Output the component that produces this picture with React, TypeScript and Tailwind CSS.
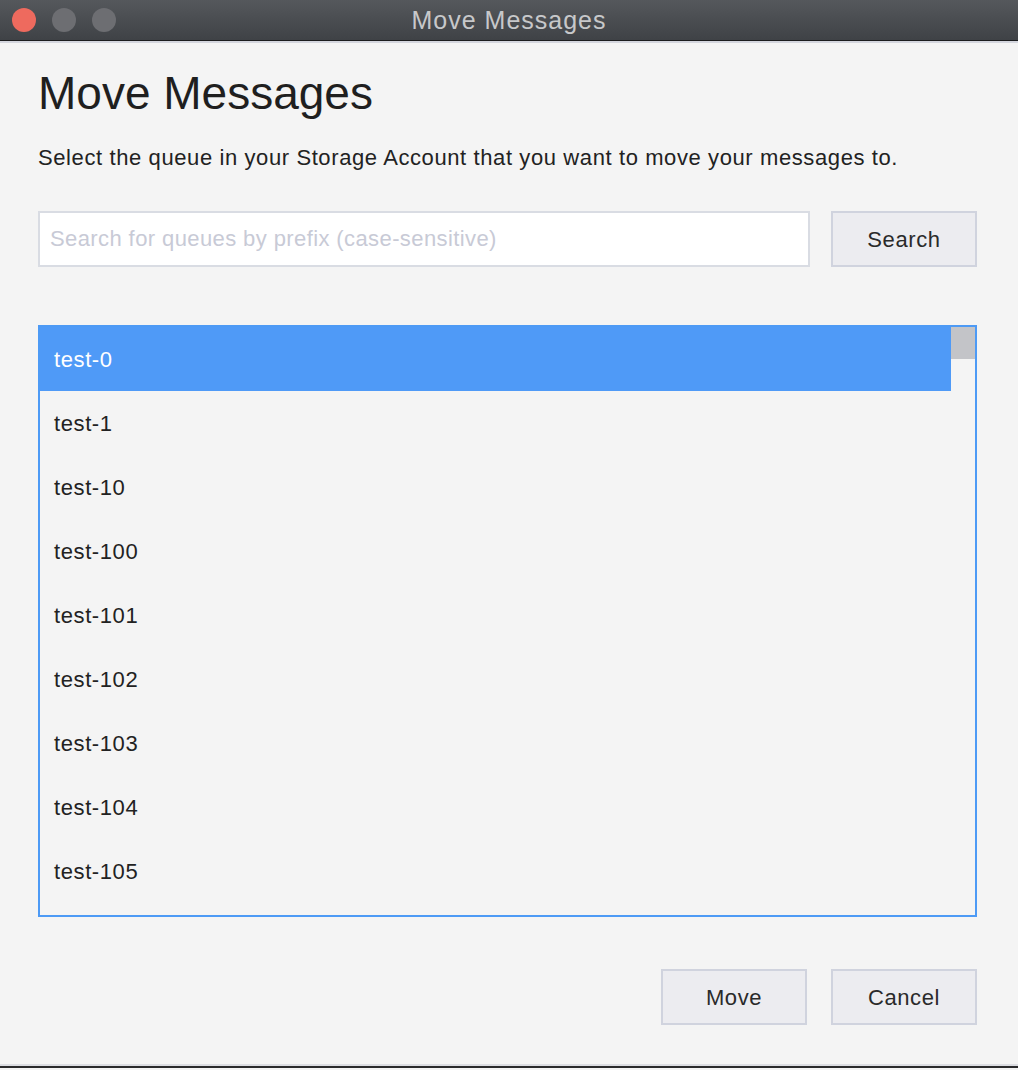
const queues = [
  "test-0",
  "test-1",
  "test-10",
  "test-100",
  "test-101",
  "test-102",
  "test-103",
  "test-104",
  "test-105",
];

const font = { fontFamily: '"Liberation Sans", Arial, sans-serif' };

const TitleBar = () => (
  <div className="relative h-[41px] bg-gradient-to-b from-[#55585c] to-[#3f4246] border-b border-[#1c1d1f] flex items-center">
    <div className="flex items-center gap-[16px] pl-[12px]">
      <span className="w-[24px] h-[24px] rounded-full bg-[#ee6a5e]" />
      <span className="w-[24px] h-[24px] rounded-full bg-[#6d6e72]" />
      <span className="w-[24px] h-[24px] rounded-full bg-[#6d6e72]" />
    </div>
    <div className="absolute inset-0 pt-[2px] flex items-center justify-center text-[25px] tracking-[1px] text-[#c7c8ca] pointer-events-none">
      Move Messages
    </div>
  </div>
);

const Button = ({ label }: { label: string }) => (
  <button className="w-[146px] h-[56px] bg-[#ececf0] border-2 border-[#d0d3de] text-[22px] tracking-[0.6px] text-[#2a2a2a] flex items-center justify-center">
    {label}
  </button>
);

export default function App() {
  return (
    <div className="w-[1018px] h-[1070px] bg-[#f4f4f4] flex flex-col overflow-hidden" style={font}>
      <TitleBar />
      <div className="h-[2px] bg-[#d4d6de]" />
      <div className="flex-1 flex flex-col px-[38px] pr-[41px]">
        <h1 className="mt-[22px] text-[46px] leading-[56px] text-[#1f1f1f] font-light">Move Messages</h1>
        <p className="mt-[24px] text-[22px] leading-[26px] tracking-[0.6px] text-[#222]">
          Select the queue in your Storage Account that you want to move your messages to.
        </p>
        <div className="mt-[40px] flex gap-[21px]">
          <input
            className="flex-1 h-[56px] bg-white border-2 border-[#d9dce3] px-[10px] text-[22px] tracking-[0.4px] outline-none placeholder:text-[#c8cad6]"
            placeholder="Search for queues by prefix (case-sensitive)"
          />
          <Button label="Search" />
        </div>
        <div className="mt-[58px] h-[592px] border-2 border-[#4d9af5] flex overflow-hidden">
          <div className="flex-1 flex flex-col">
            {queues.map((q, i) => (
              <div
                key={q}
                className={
                  i === 0
                    ? "h-[64px] shrink-0 flex items-center pl-[14px] text-[22px] tracking-[0.6px] bg-[#4f9af7] text-white"
                    : "h-[64px] shrink-0 flex items-center pl-[14px] text-[22px] tracking-[0.6px] text-[#222]"
                }
              >
                {q}
              </div>
            ))}
          </div>
          <div className="w-[24px]">
            <div className="h-[32px] bg-[#c3c4c8]" />
          </div>
        </div>
        <div className="mt-[52px] flex justify-end gap-[24px]">
          <Button label="Move" />
          <Button label="Cancel" />
        </div>
      </div>
      <div className="h-[2px] bg-[#dcdde2]" />
      <div className="h-[2px] bg-[#2a2a2c]" />
      <div className="h-[2px] bg-[#f4f4f4]" />
    </div>
  );
}
